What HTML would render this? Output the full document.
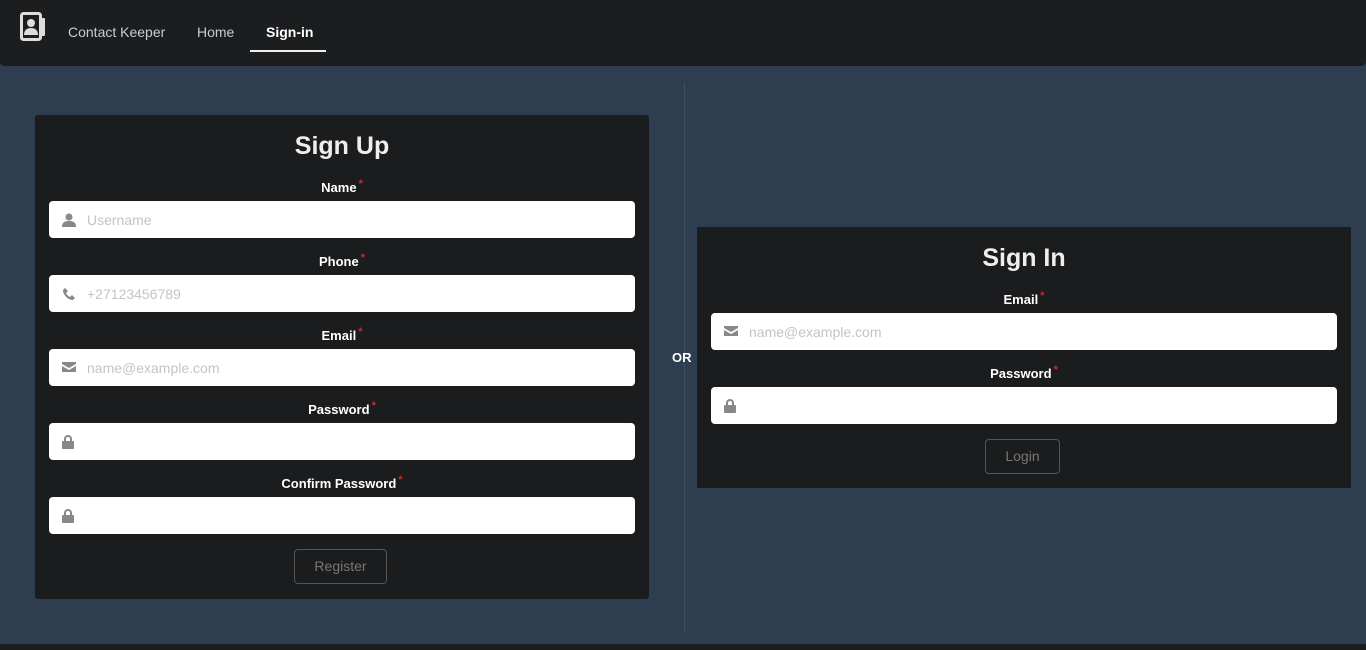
<!DOCTYPE html>
<html><head><meta charset="utf-8"><style>
*{margin:0;padding:0;box-sizing:border-box}
body{width:1366px;height:650px;background:#2e3e50;font-family:"Liberation Sans",sans-serif;position:relative;overflow:hidden}
.nav{position:absolute;left:0;top:0;width:1366px;height:66px;background:#1c1d1f;border-radius:0 0 4px 4px}
.nav a{position:absolute;top:24px;font-size:14px;color:#c8cdd2}
.card{position:absolute;background:#1b1c1e;border-radius:3px}
.t{position:absolute;left:0;right:0;text-align:center;color:#eee;font-weight:bold;font-size:25px}
.l{position:absolute;left:0;right:0;text-align:center;color:#fff;font-weight:bold;font-size:13px}
.l i{color:#d22;font-style:normal;font-size:11px;position:relative;top:-5px;margin-left:2px}
.in{position:absolute;background:#fff;border-radius:4px;height:37px}
.in svg{position:absolute;left:13px;top:12px}
.in span{position:absolute;left:38px;top:11px;font-size:14px;color:#c4c4c4}
.btn{position:absolute;border:1px solid #555;border-radius:4px;color:#777;font-size:14px;text-align:center;line-height:33px;height:35px}
</style></head><body>
<div class="nav">
<svg style="position:absolute;left:20px;top:12px" width="26" height="30" viewBox="0 0 26 30"><rect x="1.5" y="1.5" width="19" height="26" rx="2" fill="none" stroke="#ddd" stroke-width="3"/><rect x="20" y="6" width="5" height="18" rx="1" fill="#ddd"/><circle cx="11" cy="11" r="4" fill="#ddd"/><path d="M4 23c0-5 3-7 7-7s7 2 7 7z" fill="#ddd"/></svg>
<a style="left:68px">Contact Keeper</a><a style="left:197px">Home</a><a style="left:266px;color:#fff;font-weight:bold">Sign-in</a>
<div style="position:absolute;left:250px;top:50px;width:76px;height:2px;background:#eee"></div>
</div>
<div style="position:absolute;left:684px;top:82px;width:1px;height:550px;background:#3e4e60"></div>
<div style="position:absolute;left:672px;top:350px;color:#fff;font-weight:bold;font-size:13px">OR</div>
<div style="position:absolute;left:0;top:644px;width:1366px;height:6px;background:#1c1d1f"></div>

<div class="card" style="left:35px;top:115px;width:614px;height:484px">
<div class="t" style="top:17px">Sign Up</div>
<div class="l" style="top:65px">Name<i>*</i></div>
<div class="in" style="left:14px;top:86px;width:586px"><svg width="14" height="14" viewBox="0 0 14 14"><circle cx="7" cy="4" r="3.5" fill="#888"/><path d="M0 14c0-5 3-6 7-6s7 1 7 6z" fill="#888"/></svg><span>Username</span></div>
<div class="l" style="top:139px">Phone<i>*</i></div>
<div class="in" style="left:14px;top:160px;width:586px"><svg width="14" height="14" viewBox="0 0 14 14"><path d="M3 1l3 3-2 2c1 2 2 3 4 4l2-2 3 3-2 2C6 13 1 8 1 3z" fill="#888"/></svg><span>+27123456789</span></div>
<div class="l" style="top:213px">Email<i>*</i></div>
<div class="in" style="left:14px;top:234px;width:586px"><svg width="14" height="12" viewBox="0 0 14 12"><path d="M0 1h14v2L7 7 0 3z M0 5l7 4 7-4v6H0z" fill="#888"/></svg><span>name@example.com</span></div>
<div class="l" style="top:287px">Password<i>*</i></div>
<div class="in" style="left:14px;top:308px;width:586px"><svg width="12" height="14" viewBox="0 0 12 14"><path d="M3 6V4a3 3 0 016 0v2" fill="none" stroke="#888" stroke-width="2"/><rect x="0" y="6" width="12" height="8" rx="1" fill="#888"/></svg></div>
<div class="l" style="top:361px">Confirm Password<i>*</i></div>
<div class="in" style="left:14px;top:382px;width:586px"><svg width="12" height="14" viewBox="0 0 12 14"><path d="M3 6V4a3 3 0 016 0v2" fill="none" stroke="#888" stroke-width="2"/><rect x="0" y="6" width="12" height="8" rx="1" fill="#888"/></svg></div>
<div class="btn" style="left:259px;top:434px;width:93px">Register</div>
</div>

<div class="card" style="left:697px;top:227px;width:654px;height:261px;border-radius:0">
<div class="t" style="top:17px">Sign In</div>
<div class="l" style="top:65px">Email<i>*</i></div>
<div class="in" style="left:14px;top:86px;width:626px"><svg width="14" height="12" viewBox="0 0 14 12"><path d="M0 1h14v2L7 7 0 3z M0 5l7 4 7-4v6H0z" fill="#888"/></svg><span>name@example.com</span></div>
<div class="l" style="top:139px">Password<i>*</i></div>
<div class="in" style="left:14px;top:160px;width:626px"><svg width="12" height="14" viewBox="0 0 12 14"><path d="M3 6V4a3 3 0 016 0v2" fill="none" stroke="#888" stroke-width="2"/><rect x="0" y="6" width="12" height="8" rx="1" fill="#888"/></svg></div>
<div class="btn" style="left:288px;top:212px;width:75px">Login</div>
</div>
</body></html>
